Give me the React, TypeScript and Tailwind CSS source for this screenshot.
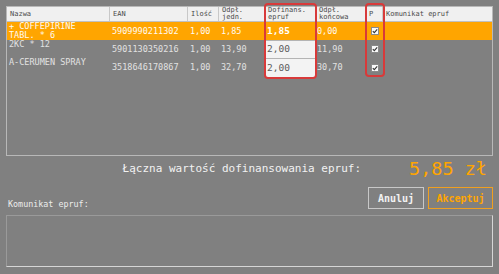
import React from 'react';

const mono = "font-['DejaVu_Sans_Mono','Liberation_Mono',monospace]";
const grid = 'grid grid-cols-[103px_78px_31px_46px_51px_50px_17px_109px]';

const rows = [
  { name: ['+ COFFEPIRINE', 'TABL. * 6'], ean: '5909990211302', qty: '1,00', unit: '1,85', dof: '1,85', end: '0,00', active: true, h: 'h-[18px]' },
  { name: ['2KC * 12'], ean: '5901130350216', qty: '1,00', unit: '13,90', dof: '2,00', end: '11,90', active: false, h: 'h-[18px]' },
  { name: ['A-CERUMEN SPRAY'], ean: '3518646170867', qty: '1,00', unit: '32,70', dof: '2,00', end: '30,70', active: false, h: 'h-[19px]' },
];

const Check = () => (
  <svg width="8" height="8" viewBox="0 0 8 8">
    <rect x="0.5" y="0.5" width="7" height="7" fill="#fafafa" stroke="#8a8a8a" />
    <path d="M1.8 4.2 L3.3 5.6 L6.2 2.4" fill="none" stroke="#333" strokeWidth="1.1" />
  </svg>
);

const Head = ({ children, last }: { children: React.ReactNode; last?: boolean }) => (
  <div className={`flex items-center px-[3px] text-[7px] leading-[7px] text-[#4a4a4a] ${last ? '' : 'border-r border-[#c8c8c8]'}`}>
    <div>{children}</div>
  </div>
);

export default function App() {
  return (
    <div className={`relative w-[499px] h-[274px] bg-[#808080] ${mono} pt-[6px] px-[6px]`}>
      {/* table */}
      <div className="h-[150px] border border-[#b8b8b8]">
        <div className={`${grid} h-[15px] bg-[#f0f0f0] border-b border-[#c0c0c0]`}>
          <Head>Nazwa</Head>
          <Head>EAN</Head>
          <Head>Ilość</Head>
          <Head>Odpł.<br />jedn.</Head>
          <Head>Dofinans.<br />epruf</Head>
          <Head>Odpł.<br />końcowa</Head>
          <Head>P</Head>
          <Head last>Komunikat epruf</Head>
        </div>
        {rows.map((r) => {
          const txt = r.active ? 'text-[#fffaf0]' : 'text-[#e2e2e2]';
          return (
            <div key={r.ean} className={`${grid} ${r.h} ${r.active ? 'bg-[#ffa500]' : ''} text-[8.5px] ${txt}`}>
              <div className="pl-[2px] leading-[9px]">
                {r.name.map((n) => (
                  <div key={n} className="whitespace-pre">{n}</div>
                ))}
              </div>
              <div className="flex items-center pl-[2px]">{r.ean}</div>
              <div className="flex items-center pl-[2px]">{r.qty}</div>
              <div className="flex items-center pl-[2px]">{r.unit}</div>
              <div
                className={`flex items-center pl-[2px] text-[9.5px] ${
                  r.active ? 'font-bold text-white' : 'bg-[#f3f3f3] text-[#5c5c5c] border-t border-[#b4b4b4]'
                }`}
              >
                {r.dof}
              </div>
              <div className="flex items-center pl-[1px]">{r.end}</div>
              <div className="flex items-center justify-center">
                <Check />
              </div>
              <div />
            </div>
          );
        })}
      </div>

      {/* summary */}
      <div className="flex h-[26px] items-center justify-end gap-[48px] pr-[6px]">
        <span className="text-[11px] text-[#f2f2f2]">Łączna wartość dofinansowania epruf:</span>
        <span className="text-[18.5px] leading-none text-[#ffa500]">5,85 zł</span>
      </div>

      {/* buttons */}
      <div className="mt-[5px] flex items-end justify-between">
        <span className="pl-[2px] text-[8.4px] leading-[9px] text-[#ececec]">Komunikat epruf:</span>
        <div className="flex gap-[4px]">
          <button className="h-[22px] w-[56px] border border-[#c8c8c8] text-[10px] font-bold text-[#f2f2f2]">Anuluj</button>
          <button className="h-[22px] w-[65px] border border-[#f0a020] text-[10px] font-bold text-[#ffa500]">Akceptuj</button>
        </div>
      </div>

      {/* textarea */}
      <div className="mt-[6px] h-[52px] border border-t-[#9a9a9a] border-l-[#9a9a9a] border-r-[#d6d6d6] border-b-[#d6d6d6]" />

      {/* red annotation outlines */}
      <div className="absolute left-[264px] top-[3px] h-[76px] w-[53px] rounded-[4px] border-2 border-[#d83a3a]" />
      <div className="absolute left-[365px] top-[3px] h-[74px] w-[20px] rounded-[4px] border-2 border-[#d83a3a]" />
    </div>
  );
}
